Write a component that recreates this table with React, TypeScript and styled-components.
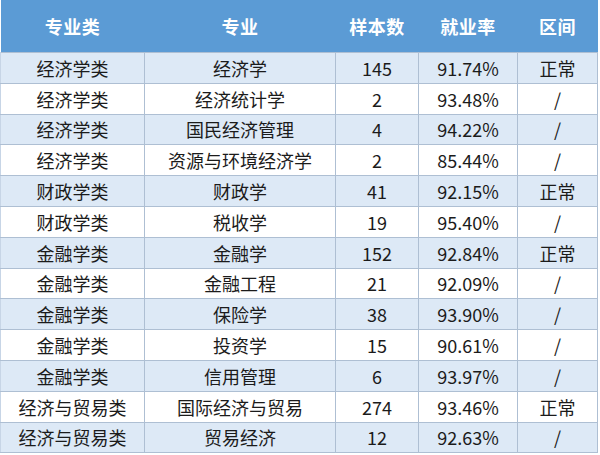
import styled, { createGlobalStyle } from "styled-components";

const GlobalStyle = createGlobalStyle`
  html, body {
    margin: 0;
    padding: 0;
    background: #ffffff;
  }
  body {
    font-family: "Noto Sans CJK SC", "Liberation Sans", sans-serif;
  }
`;

const Wrapper = styled.div`
  width: 600px;
  height: 455px;
  padding: 0 3px 0 0;
  box-sizing: border-box;
  background: #fff;
`;

const Table = styled.table`
  width: 597px;
  table-layout: fixed;
  border-collapse: collapse;
  font-size: 18px;
  color: #1b1b1b;
`;

const HeaderCell = styled.th`
  height: 52px;
  padding: 0;
  background: #5b9bd5;
  color: #ffffff;
  font-weight: 700;
  text-align: center;
  letter-spacing: 0.5px;
`;

const Row = styled.tr<{ $striped: boolean }>`
  background: ${({ $striped }) => ($striped ? "#dde9f6" : "#ffffff")};
`;

const Cell = styled.td`
  height: 30.8px;
  padding: 0;
  text-align: center;
  line-height: 28px;
  white-space: nowrap;
  border: 1px solid #aebfd3;
  box-sizing: border-box;
  &:first-child {
    border-left: 1px solid #c7d5e6;
  }
`;

interface Major {
  category: string;
  name: string;
  samples: number;
  rate: string;
  range: string;
}

const columns = [
  { title: "专业类", width: 144 },
  { title: "专业", width: 191 },
  { title: "样本数", width: 83 },
  { title: "就业率", width: 99 },
  { title: "区间", width: 80 },
];

const majors: Major[] = [
  { category: "经济学类", name: "经济学", samples: 145, rate: "91.74%", range: "正常" },
  { category: "经济学类", name: "经济统计学", samples: 2, rate: "93.48%", range: "/" },
  { category: "经济学类", name: "国民经济管理", samples: 4, rate: "94.22%", range: "/" },
  { category: "经济学类", name: "资源与环境经济学", samples: 2, rate: "85.44%", range: "/" },
  { category: "财政学类", name: "财政学", samples: 41, rate: "92.15%", range: "正常" },
  { category: "财政学类", name: "税收学", samples: 19, rate: "95.40%", range: "/" },
  { category: "金融学类", name: "金融学", samples: 152, rate: "92.84%", range: "正常" },
  { category: "金融学类", name: "金融工程", samples: 21, rate: "92.09%", range: "/" },
  { category: "金融学类", name: "保险学", samples: 38, rate: "93.90%", range: "/" },
  { category: "金融学类", name: "投资学", samples: 15, rate: "90.61%", range: "/" },
  { category: "金融学类", name: "信用管理", samples: 6, rate: "93.97%", range: "/" },
  { category: "经济与贸易类", name: "国际经济与贸易", samples: 274, rate: "93.46%", range: "正常" },
  { category: "经济与贸易类", name: "贸易经济", samples: 12, rate: "92.63%", range: "/" },
];

export default function App() {
  return (
    <Wrapper>
      <GlobalStyle />
      <Table>
        <colgroup>
          {columns.map(col => (
            <col key={col.title} style={{ width: col.width }} />
          ))}
        </colgroup>
        <thead>
          <tr>
            {columns.map(col => (
              <HeaderCell key={col.title}>{col.title}</HeaderCell>
            ))}
          </tr>
        </thead>
        <tbody>
          {majors.map((m, i) => (
            <Row key={m.name} $striped={i % 2 === 0}>
              <Cell>{m.category}</Cell>
              <Cell>{m.name}</Cell>
              <Cell>{m.samples}</Cell>
              <Cell>{m.rate}</Cell>
              <Cell>{m.range}</Cell>
            </Row>
          ))}
        </tbody>
      </Table>
    </Wrapper>
  );
}
